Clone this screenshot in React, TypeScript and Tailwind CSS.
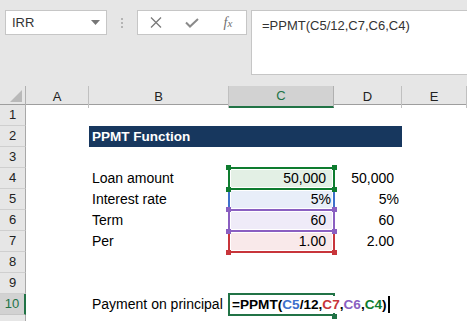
import React from "react";

const ROWS = [1, 2, 3, 4, 5, 6, 7, 8, 9, 10, 11];

function Handles({ color, top, bottom }: { color: string; top?: boolean; bottom?: boolean }) {
  return (
    <>
      {top && <div className={`absolute left-[-3px] top-[-3px] w-[5px] h-[5px] z-20 ${color}`} />}
      {top && <div className={`absolute right-[-3px] top-[-3px] w-[5px] h-[5px] z-20 ${color}`} />}
      {bottom && <div className={`absolute left-[-3px] bottom-[-3px] w-[5px] h-[5px] z-20 ${color}`} />}
      {bottom && <div className={`absolute right-[-3px] bottom-[-3px] w-[5px] h-[5px] z-20 ${color}`} />}
    </>
  );
}

function RangeCell({
  value,
  pr,
  tint,
  color,
  top,
  bottom,
  hTop,
  hBottom,
}: {
  value: string;
  pr: string;
  tint: string;
  color: string;
  top?: boolean;
  bottom?: boolean;
  hTop?: boolean;
  hBottom?: boolean;
}) {
  return (
    <div className="relative h-[21px]">
      <div className={`absolute inset-[2px] ${tint}`} />
      <div className={`absolute left-[-1px] top-[-1px] bottom-[-1px] w-[2px] z-10 ${color}`} />
      <div className={`absolute right-[-1px] top-[-1px] bottom-[-1px] w-[2px] z-10 ${color}`} />
      {top && <div className={`absolute left-[-1px] right-[-1px] top-[-1px] h-[2px] z-10 ${color}`} />}
      {bottom && <div className={`absolute left-[-1px] right-[-1px] bottom-[-1px] h-[2px] z-10 ${color}`} />}
      <Handles color={color} top={hTop} bottom={hBottom} />
      <div className={`relative z-0 text-right leading-[21px] text-[14px] text-black ${pr}`}>{value}</div>
    </div>
  );
}

function Cell({ children, className = "" }: { children?: React.ReactNode; className?: string }) {
  return <div className={`h-[21px] leading-[21px] text-[14px] text-black whitespace-nowrap ${className}`}>{children}</div>;
}

export default function App() {
  return (
    <div className="w-[467px] h-[321px] overflow-hidden bg-white font-['Liberation_Sans',Arial,sans-serif] text-black">
      {/* Toolbar / formula bar */}
      <div className="h-[86px] bg-[#e6e6e6] flex items-start pt-[10px] pl-[5px]">
        <div className="w-[102px] h-[25px] bg-white border border-[#c6c6c6] flex items-center justify-between pl-[6px] pr-[6px] text-[13px] text-[#333]">
          <span>IRR</span>
          <svg width="9" height="5" viewBox="0 0 9 5">
            <path d="M0 0 L9 0 L4.5 5 Z" fill="#767676" />
          </svg>
        </div>
        <div className="w-[30px] h-[25px] flex flex-col items-center justify-center gap-[2px]">
          <div className="w-[2px] h-[2px] bg-[#b4b4b4]" />
          <div className="w-[2px] h-[2px] bg-[#b4b4b4]" />
          <div className="w-[2px] h-[2px] bg-[#b4b4b4]" />
        </div>
        <div className="w-[110px] h-[25px] bg-white border border-[#c6c6c6] flex items-center">
          <div className="w-[36px] flex justify-center">
            <svg width="12" height="11" viewBox="0 0 12 11">
              <path d="M1 0.5 L11 10.5 M11 0.5 L1 10.5" stroke="#7a7a7a" strokeWidth="1.3" fill="none" />
            </svg>
          </div>
          <div className="w-[36px] flex justify-center">
            <svg width="14" height="10" viewBox="0 0 14 10">
              <path d="M1 4.5 L5 8.5 L13 1" stroke="#8a8a8a" strokeWidth="2" fill="none" />
            </svg>
          </div>
          <div className="w-[36px] flex justify-center">
            <span className="font-['Liberation_Serif',serif] italic text-[14px] leading-none text-[#6f6f6f]">
              f<span className="text-[11px]">x</span>
            </span>
          </div>
        </div>
        <div className="ml-[4px] flex-1 h-[65px] bg-white border border-r-0 border-[#c6c6c6] pl-[10px] pt-[6px] text-[13px] leading-[18px] text-[#333]">
          =PPMT(C5/12,C7,C6,C4)
        </div>
      </div>

      {/* Column headers */}
      <div className="grid grid-cols-[26px_63px_140px_105px_68px_65px] h-[19px] bg-[#e6e6e6] border-b border-[#9e9e9e] text-[13px] text-[#222]">
        <div className="relative border-r border-[#b0b0b0]">
          <svg className="absolute left-[10px] top-[4px]" width="12" height="12" viewBox="0 0 12 12">
            <path d="M12 0 L12 12 L0 12 Z" fill="#b9b9b9" />
          </svg>
        </div>
        <div className="border-r border-[#c0c0c0] flex items-center justify-center">A</div>
        <div className="border-r border-[#c0c0c0] flex items-center justify-center">B</div>
        <div className="bg-[#d2d2d2] border-b-2 border-b-[#217346] border-r border-r-[#b0b0b0] flex items-center justify-center text-[#217346]">
          C
        </div>
        <div className="border-r border-[#c0c0c0] flex items-center justify-center">D</div>
        <div className="border-r border-[#c0c0c0] flex items-center justify-center">E</div>
      </div>

      {/* Body */}
      <div className="grid grid-cols-[26px_1fr]">
        <div className="flex flex-col">
          {ROWS.map((r) =>
            r === 10 ? (
              <div
                key={r}
                className="h-[21px] bg-[#d2d2d2] border-b border-[#c6c6c6] border-r-2 border-r-[#217346] flex items-center justify-center text-[13px] text-[#217346]"
              >
                {r}
              </div>
            ) : (
              <div
                key={r}
                className="h-[21px] bg-[#e6e6e6] border-b border-[#cfcfcf] border-r border-r-[#a8a8a8] flex items-center justify-center text-[13px] text-[#222]"
              >
                {r === 11 ? null : r}
              </div>
            )
          )}
        </div>
        <div className="grid grid-cols-[63px_140px_105px_68px_65px] auto-rows-[21px]">
          {/* row 1 */}
          <Cell />
          <Cell />
          <Cell />
          <Cell />
          <Cell />
          {/* row 2 */}
          <Cell />
          <div className="col-span-3 h-[21px] bg-[#17375e] pl-[3px] leading-[21px] text-[13.5px] font-bold text-white">
            PPMT Function
          </div>
          <Cell />
          {/* row 3 */}
          <Cell />
          <Cell />
          <Cell />
          <Cell />
          <Cell />
          {/* row 4 */}
          <Cell />
          <Cell className="pl-[3px]">Loan amount</Cell>
          <RangeCell value="50,000" pr="pr-[8px]" tint="bg-[#e3f0e5]" color="bg-[#0e7c2f]" top bottom hTop hBottom />
          <Cell className="text-right pr-[8px]">50,000</Cell>
          <Cell />
          {/* row 5 */}
          <Cell />
          <Cell className="pl-[3px]">Interest rate</Cell>
          <RangeCell value="5%" pr="pr-[3px]" tint="bg-[#e8eef9]" color="bg-[#3d70cc]" />
          <Cell className="text-right pr-[3px]">5%</Cell>
          <Cell />
          {/* row 6 */}
          <Cell />
          <Cell className="pl-[3px]">Term</Cell>
          <RangeCell value="60" pr="pr-[8px]" tint="bg-[#efebf8]" color="bg-[#8a5fc1]" top bottom hTop hBottom />
          <Cell className="text-right pr-[8px]">60</Cell>
          <Cell />
          {/* row 7 */}
          <Cell />
          <Cell className="pl-[3px]">Per</Cell>
          <RangeCell value="1.00" pr="pr-[8px]" tint="bg-[#f9e9ea]" color="bg-[#c8353b]" bottom hBottom />
          <Cell className="text-right pr-[8px]">2.00</Cell>
          <Cell />
          {/* row 8 */}
          <Cell />
          <Cell />
          <Cell />
          <Cell />
          <Cell />
          {/* row 9 */}
          <Cell />
          <Cell />
          <Cell />
          <Cell />
          <Cell />
          {/* row 10 */}
          <Cell />
          <Cell className="pl-[3px]">Payment on principal</Cell>
          <div className="relative h-[21px]">
            <div className="absolute left-[-1px] right-[-1px] top-[-1px] bottom-[-1px] border-2 border-[#217346]" />
            <div className="absolute right-[-3px] bottom-[-4px] w-[5px] h-[5px] bg-[#217346]" />
            <div className="absolute left-[2px] top-[2px] bottom-[2px] flex items-center bg-white pl-[1px] z-10 whitespace-nowrap text-[13.6px] font-bold leading-[17px]">
              <span className="text-black">=PPMT(</span>
              <span className="text-[#3d70cc]">C5</span>
              <span className="text-black">/12,</span>
              <span className="text-[#c8353b]">C7</span>
              <span className="text-black">,</span>
              <span className="text-[#8a5fc1]">C6</span>
              <span className="text-black">,</span>
              <span className="text-[#0e7c2f]">C4</span>
              <span className="text-black">)</span>
              <span className="ml-[1px] w-[2px] h-[17px] bg-black" />
            </div>
          </div>
          <Cell />
          <Cell />
          {/* row 11 */}
          <Cell />
          <Cell />
          <Cell />
          <Cell />
          <Cell />
        </div>
      </div>
    </div>
  );
}
